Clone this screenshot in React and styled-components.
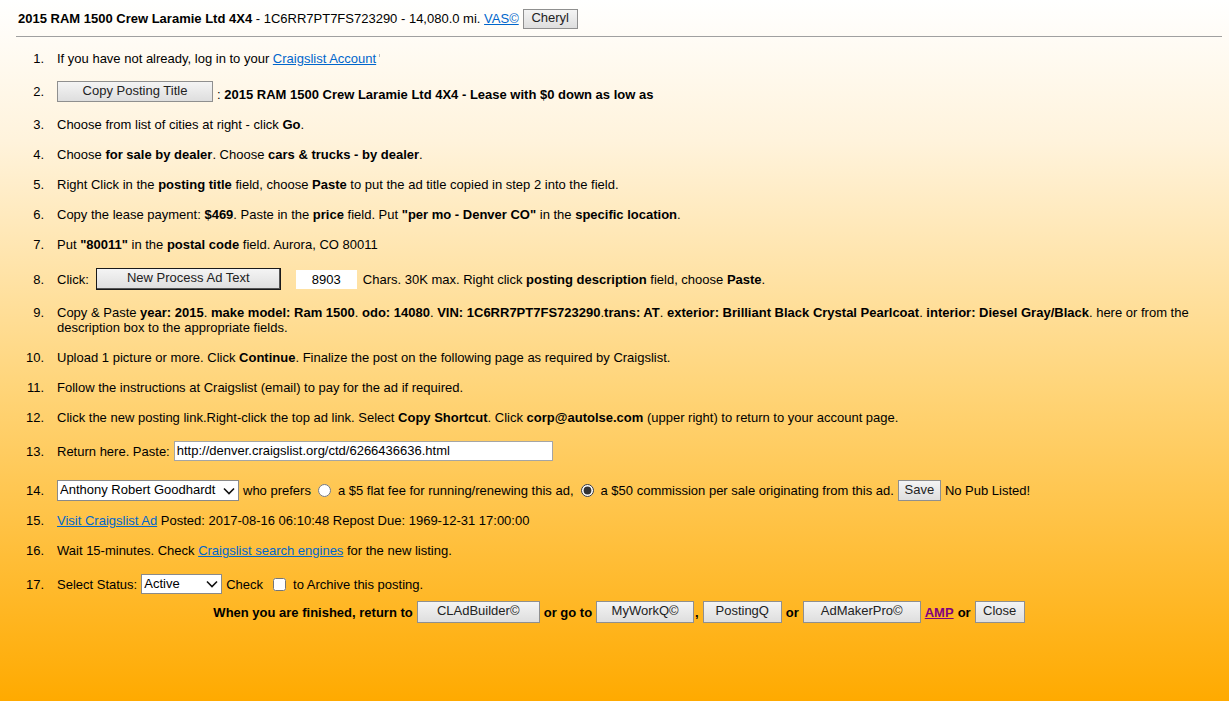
import React from 'react'
import styled, { createGlobalStyle } from 'styled-components'

const GlobalStyle = createGlobalStyle`
  html, body {
    margin: 0;
    min-height: 701px;
  }
  body {
    background: linear-gradient(to bottom, #ffffff 0%, #fff3dc 20%, #ffd57a 55%, #ffaa00 100%);
    background-attachment: fixed;
    font-family: "Liberation Sans", Arial, sans-serif;
    font-size: 13px;
    color: #000;
  }
`

const Page = styled.div`
  padding: 8px 7px 0 16px;
`

const Header = styled.div`
  display: flex;
  align-items: center;
  gap: 4px;
  padding-left: 2px;
  height: 21px;
`

const Rule = styled.hr`
  margin: 7px 0 0;
  border: 0;
  border-top: 1px solid #a0a0a0;
`

const Steps = styled.ol`
  list-style: none;
  margin: 14px 0 0;
  padding: 0;
`

const Step = styled.li`
  display: flex;
  gap: 13px;
  line-height: 15px;
  margin-bottom: ${p => (p.$space ?? 15)}px;
  align-items: ${p => p.$center ? 'center' : 'flex-start'};
`

const Num = styled.span`
  width: 28px;
  flex-shrink: 0;
  text-align: right;
`

const Body = styled.div`
  flex: 1;
  display: flex;
  flex-wrap: wrap;
  align-items: center;
  gap: 4px;
  white-space: pre-wrap;
`

const Text = styled.div`
  flex: 1;
  padding-right: 30px;
`

const Lead = styled.span`
  margin-right: ${p => p.$gap || 0}px;
`

const Link = styled.a`
  color: ${p => p.$visited ? '#800080' : '#0066cc'};
  font-weight: ${p => p.$visited ? 'bold' : 'normal'};
  text-decoration: underline;
  cursor: pointer;
`

const Tick = styled.span`
  display: inline-block;
  width: 1px;
  height: 3px;
  background: #b8b8b8;
  margin-left: 3px;
  vertical-align: 6px;
`

const Button = styled.button`
  width: ${p => p.$w}px;
  height: ${p => p.$h || 22}px;
  padding: 0 0 3px;
  font-family: "Liberation Sans", Arial, sans-serif;
  font-size: 13px;
  color: #222;
  background: linear-gradient(to bottom, #f4f4f4, #dedede);
  border: 1px solid ${p => p.$dark ? '#1a1a1a' : '#8f8f8f'};
  box-shadow: ${p => p.$dark ? 'inset -1px -1px 0 #555' : 'none'};
  border-radius: 0;
  flex-shrink: 0;
`

const CountBox = styled.input`
  width: 61px;
  height: 19px;
  box-sizing: border-box;
  border: 0;
  background: #fff;
  text-align: center;
  font-family: "Liberation Sans", Arial, sans-serif;
  font-size: 13px;
  padding: 0;
  margin-left: 11px;
  margin-right: 2px;
`

const UrlBox = styled.input`
  width: 379px;
  height: 20px;
  box-sizing: border-box;
  border: 1px solid #a5a5a5;
  background: #fff;
  font-family: "Liberation Sans", Arial, sans-serif;
  font-size: 13px;
  padding: 0 2px 2px;
`

const SelectWrap = styled.span`
  position: relative;
  display: inline-flex;
  flex-shrink: 0;
`

const Select = styled.select`
  appearance: none;
  width: ${p => p.$w}px;
  height: ${p => p.$h}px;
  box-sizing: border-box;
  border: 1px solid #8a8a8a;
  background: #fff;
  border-radius: 0;
  font-family: "Liberation Sans", Arial, sans-serif;
  font-size: 13px;
  color: #000;
  padding: 0 16px 2px 2px;
`

const Chevron = styled.svg`
  position: absolute;
  right: 4px;
  top: 50%;
  transform: translateY(-50%);
  pointer-events: none;
`

const Radio = styled.input`
  width: 13px;
  height: 13px;
  margin: 0 3px 0 3px;
  accent-color: #333;
`

const Check = styled.input`
  width: 13px;
  height: 13px;
  margin: 0 3px 0 6px;
  accent-color: #333;
`

const Finish = styled.div`
  display: flex;
  justify-content: center;
  align-items: center;
  gap: 4px;
  font-weight: bold;
`

const Comma = styled.span`
  margin-left: -3px;
`

const Dropdown = ({ w, h, children }) => (
  <SelectWrap>
    <Select $w={w} $h={h}>{children}</Select>
    <Chevron width="12" height="8" viewBox="0 0 12 8">
      <path d="M1 1.5 L6 6.5 L11 1.5" fill="none" stroke="#111" strokeWidth="1.6" />
    </Chevron>
  </SelectWrap>
)

export default function App() {
  return (
    <>
      <GlobalStyle />
      <Page>
        <Header>
          <span>
            <b>2015 RAM 1500 Crew Laramie Ltd 4X4</b> - 1C6RR7PT7FS723290 - 14,080.0 mi.{' '}
            <Link>VAS©</Link>
          </span>
          <Button $w={55} $h={20}>Cheryl</Button>
        </Header>
        <Rule />

        <Steps>
          <Step>
            <Num>1.</Num>
            <Text>If you have not already, log in to your <Link>Craigslist Account</Link><Tick /></Text>
          </Step>
          <Step $center>
            <Num>2.</Num>
            <Body>
              <Button $w={156} $h={21}>Copy Posting Title</Button>
              <span style={{ paddingTop: 5 }}>: <b>2015 RAM 1500 Crew Laramie Ltd 4X4 - Lease with $0 down as low as</b></span>
            </Body>
          </Step>
          <Step>
            <Num>3.</Num>
            <Text>Choose from list of cities at right - click <b>Go</b>.</Text>
          </Step>
          <Step>
            <Num>4.</Num>
            <Text>Choose <b>for sale by dealer</b>. Choose <b>cars &amp; trucks - by dealer</b>.</Text>
          </Step>
          <Step>
            <Num>5.</Num>
            <Text>Right Click in the <b>posting title</b> field, choose <b>Paste</b> to put the ad title copied in step 2 into the field.</Text>
          </Step>
          <Step>
            <Num>6.</Num>
            <Text>Copy the lease payment: <b>$469</b>. Paste in the <b>price</b> field. Put <b>"per mo - Denver CO"</b> in the <b>specific location</b>.</Text>
          </Step>
          <Step $space={16}>
            <Num>7.</Num>
            <Text>Put <b>"80011"</b> in the <b>postal code</b> field. Aurora, CO 80011</Text>
          </Step>
          <Step $center>
            <Num>8.</Num>
            <Body>
              <Lead $gap={3}>Click:</Lead>
              <Button $w={185} $dark>New Process Ad Text</Button>
              <CountBox defaultValue="8903" />
              <span>Chars. 30K max. Right click <b>posting description</b> field, choose <b>Paste</b>.</span>
            </Body>
          </Step>
          <Step>
            <Num>9.</Num>
            <Text>
              Copy &amp; Paste <b>year: 2015</b>. <b>make model: Ram 1500</b>. <b>odo: 14080</b>. <b>VIN: 1C6RR7PT7FS723290</b>.<b>trans: AT</b>. <b>exterior: Brilliant Black Crystal Pearlcoat</b>. <b>interior: Diesel Gray/Black</b>. here or from the description box to the appropriate fields.
            </Text>
          </Step>
          <Step>
            <Num>10.</Num>
            <Text>Upload 1 picture or more. Click <b>Continue</b>. Finalize the post on the following page as required by Craigslist.</Text>
          </Step>
          <Step>
            <Num>11.</Num>
            <Text>Follow the instructions at Craigslist (email) to pay for the ad if required.</Text>
          </Step>
          <Step $space={16}>
            <Num>12.</Num>
            <Text>Click the new posting link.Right-click the top ad link. Select <b>Copy Shortcut</b>. Click <b>corp@autolse.com</b> (upper right) to return to your account page.</Text>
          </Step>
          <Step $center $space={19}>
            <Num>13.</Num>
            <Body>
              <span>Return here. Paste:</span>
              <UrlBox defaultValue="http://denver.craigslist.org/ctd/6266436636.html" />
            </Body>
          </Step>
          <Step $center $space={12}>
            <Num>14.</Num>
            <Body>
              <Dropdown w={182} h={21}>
                <option>Anthony Robert Goodhardt</option>
              </Dropdown>
              <span>who prefers</span>
              <Radio type="radio" name="fee" />
              <span>a $5 flat fee for running/renewing this ad,</span>
              <Radio type="radio" name="fee" defaultChecked />
              <span>a $50 commission per sale originating from this ad.</span>
              <Button $w={43} $h={21}>Save</Button>
              <span>No Pub Listed!</span>
            </Body>
          </Step>
          <Step>
            <Num>15.</Num>
            <Text><Link>Visit Craigslist Ad</Link> Posted: 2017-08-16 06:10:48 Repost Due: 1969-12-31 17:00:00</Text>
          </Step>
          <Step $space={16}>
            <Num>16.</Num>
            <Text>Wait 15-minutes. Check <Link>Craigslist search engines</Link> for the new listing.</Text>
          </Step>
          <Step $center $space={7}>
            <Num>17.</Num>
            <Body>
              <span>Select Status:</span>
              <Dropdown w={81} h={20}>
                <option>Active</option>
              </Dropdown>
              <span>Check</span>
              <Check type="checkbox" />
              <span>to Archive this posting.</span>
            </Body>
          </Step>
        </Steps>

        <Finish>
          <span>When you are finished, return to</span>
          <Button $w={123}>CLAdBuilder©</Button>
          <span>or go to</span>
          <Button $w={98}>MyWorkQ©</Button>
          <Comma>,</Comma>
          <Button $w={79}>PostingQ</Button>
          <span>or</span>
          <Button $w={118}>AdMakerPro©</Button>
          <Link $visited>AMP</Link>
          <span>or</span>
          <Button $w={50}>Close</Button>
        </Finish>
      </Page>
    </>
  )
}
